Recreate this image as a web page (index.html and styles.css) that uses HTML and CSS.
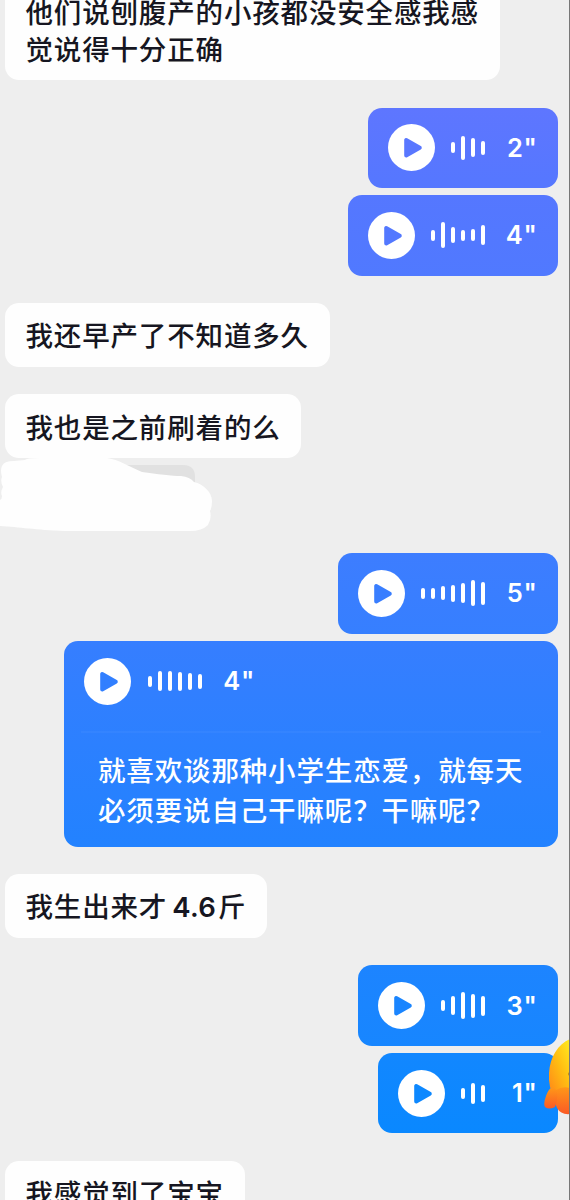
FILE: index.html
```html
<!DOCTYPE html>
<html lang="zh-CN">
<head>
<meta charset="utf-8">
<title>聊天</title>
<link rel="stylesheet" href="styles.css">
</head>
<body>
<svg class="defs" aria-hidden="true">
  <symbol id="play" viewBox="0 0 47 47"><circle cx="23.5" cy="23.5" r="23.5" fill="#fff"/><path d="M18.2 16.1v15.4L31.8 23.8Z" fill="currentColor" stroke="currentColor" stroke-width="4" stroke-linejoin="round"/></symbol>
</svg>
<main class="chat">
  <div class="bubble first">他们说刨腹产的小孩都没安全感我感<br>觉说得十分正确</div>

  <div class="voice tone-a group">
    <svg class="play"><use href="#play"/></svg>
    <div class="wave"><i class="h11"></i><i class="h24"></i><i class="h19"></i><i class="h14"></i></div>
    <span class="secs">2"</span>
  </div>
  <div class="voice tone-b next">
    <svg class="play"><use href="#play"/></svg>
    <div class="wave"><i class="h11"></i><i class="h26"></i><i class="h16"></i><i class="h11"></i><i class="h12"></i><i class="h20"></i></div>
    <span class="secs">4"</span>
  </div>

  <div class="bubble group">我还早产了不知道多久</div>
  <div class="bubble group">我也是之前刷着的么</div>

  <div class="erased">
    <svg class="scribble" viewBox="0 0 220 80">
      <path d="M120 7H183Q195 7 195 19V35H120Z" fill="#e1e1e1"/>
      <path d="M0 68V42Q2 41 2 38Q0 34 3 29Q0 23 2 19Q0 12 2 8Q4 3 14 3L25 2Q26 0 40 0H107C120 2 130 9 142 14C157 16 172 18 181 18Q190 19 194 24C203 26 212 34 212 43Q212 50 210 53Q212 60 208 67Q202 73 190 73H65C35 72 20 69 0 68Z" fill="#fefefe"/>
    </svg>
  </div>

  <div class="voice tone-c">
    <svg class="play"><use href="#play"/></svg>
    <div class="wave"><i class="h11"></i><i class="h11"></i><i class="h14"></i><i class="h17"></i><i class="h20"></i><i class="h26"></i><i class="h23"></i></div>
    <span class="secs">5"</span>
  </div>
  <div class="transcript tone-d next">
    <div class="voice-row">
      <svg class="play"><use href="#play"/></svg>
      <div class="wave"><i class="h11"></i><i class="h20"></i><i class="h20"></i><i class="h19"></i><i class="h17"></i><i class="h15"></i></div>
      <span class="secs">4"</span>
    </div>
    <p class="words">就喜欢谈那种小学生恋爱，就每天<br>必须要说自己干嘛呢？干嘛呢？</p>
  </div>

  <div class="bubble group">我生出来才<span class="num">4.6</span>斤</div>

  <div class="voice tone-e group">
    <svg class="play"><use href="#play"/></svg>
    <div class="wave"><i class="h11"></i><i class="h19"></i><i class="h27"></i><i class="h24"></i><i class="h20"></i></div>
    <span class="secs">3"</span>
  </div>
  <div class="voice tone-f next">
    <svg class="play"><use href="#play"/></svg>
    <div class="wave"><i class="h11"></i><i class="h21"></i><i class="h17"></i></div>
    <span class="secs">1"</span>
  </div>

  <div class="bubble group">我感觉到了宝宝</div>

  <svg class="sticker" viewBox="0 0 26 78">
    <defs>
      <linearGradient id="body" x1="1" y1="0" x2=".3" y2="1"><stop offset="0" stop-color="#ffec20"/><stop offset=".5" stop-color="#ffbd12"/><stop offset="1" stop-color="#ff8a18"/></linearGradient>
      <linearGradient id="hand" x1="0" y1="0" x2="0" y2="1"><stop offset="0" stop-color="#ff9718"/><stop offset="1" stop-color="#fb5a25"/></linearGradient>
    </defs>
    <path d="M26 1C14 6 6 19 5 35Q4 50 11 60L26 66Z" fill="url(#body)"/>
    <path d="M26 50Q18 48 12 52Q9 62 13 70Q17 77 26 76Z" fill="url(#hand)"/>
    <path d="M7 50Q4 52 2 58Q-1 66 1 69Q5 72 11 69Q14 63 13 54Q11 49 7 50Z" fill="url(#hand)"/>
    <path d="M24.5 34q-1 2 0 4z" fill="#713b16"/>
  </svg>
  <div class="edge"></div>
</main>
</body>
</html>
```
FILE: styles.css
```css
* { box-sizing: border-box; }
body { margin: 0; background: #eee; }
.defs { position: absolute; width: 0; height: 0; }

.chat {
  position: relative;
  display: flex;
  flex-direction: column;
  align-items: flex-start;
  width: 570px;
  height: 1200px;
  padding: 0 12.5px 0 5px;
  overflow: hidden;
  background: #eee;
  font-family: "Noto Sans CJK SC", sans-serif;
}
.chat > * { flex-shrink: 0; }

.bubble {
  padding: 13.2px 20.8px 13.5px 20.5px;
  border-radius: 14px;
  background: #fefefe;
  color: #161621;
  font-size: 27.5px;
  font-weight: 500;
  line-height: 37px;
  letter-spacing: .84px;
  white-space: nowrap;
}
.first { margin-top: -20.5px; }
.group { margin-top: 27.5px; }
.next { margin-top: 7px; }
.num {
  margin: 0 2px 0 5px;
  font-family: Inter, sans-serif;
  font-size: 27.5px;
  font-weight: 600;
  line-height: 1;
  letter-spacing: .3px;
}

.voice, .voice-row { display: flex; align-items: center; }
.voice {
  align-self: flex-end;
  height: 80.5px;
  padding: 0 20px;
  border-radius: 14px;
}
.play { display: block; width: 47px; height: 47px; margin-right: 16.5px; }
.wave { display: flex; align-items: center; gap: 6px; height: 30px; }
.wave i { width: 4px; border-radius: 2px; background: #fff; }
.h11 { height: 11px; }
.h12 { height: 12px; }
.h14 { height: 14px; }
.h15 { height: 15px; }
.h16 { height: 16px; }
.h17 { height: 17px; }
.h19 { height: 19px; }
.h20 { height: 20px; }
.h21 { height: 21px; }
.h23 { height: 23px; }
.h24 { height: 24px; }
.h26 { height: 26px; }
.h27 { height: 27px; }
.secs {
  width: 52.5px;
  color: #fff;
  font-family: Inter, sans-serif;
  font-size: 25.5px;
  font-weight: 600;
  line-height: 30px;
  letter-spacing: .7px;
  text-align: right;
  white-space: nowrap;
}

.transcript {
  align-self: flex-end;
  width: 493.5px;
  height: 206px;
  border-radius: 14px;
}
.voice-row { height: 81px; padding-left: 20px; }
.voice-row .secs { width: 53.5px; }
.words {
  margin: 9px 17px 0;
  padding: 16px 0 0 17px;
  border-top: 2px solid rgba(255, 255, 255, .035);
  color: #fff;
  font-size: 27.5px;
  font-weight: 500;
  line-height: 40.5px;
  letter-spacing: .85px;
  white-space: nowrap;
}

.tone-a { background: linear-gradient(#5e76ff, #5577ff); color: #5977ff; }
.tone-b { background: linear-gradient(#5577ff, #5079ff); color: #5378ff; }
.tone-c { background: linear-gradient(#3d7dff, #367fff); color: #397eff; }
.tone-d { background: linear-gradient(#367eff, #2282ff); color: #317fff; }
.tone-e { background: linear-gradient(#1d84ff, #1786ff); color: #1a85ff; }
.tone-f { background: linear-gradient(#1287ff, #0a88ff); color: #0d88ff; }

.erased { height: 95px; }
.scribble { display: block; width: 220px; height: 80px; margin-left: -5px; }

.sticker { position: absolute; left: 544px; top: 1038px; width: 26px; height: 78px; }
.edge { position: absolute; top: 0; right: 0; width: 1px; height: 100%; background: #777; }
```
